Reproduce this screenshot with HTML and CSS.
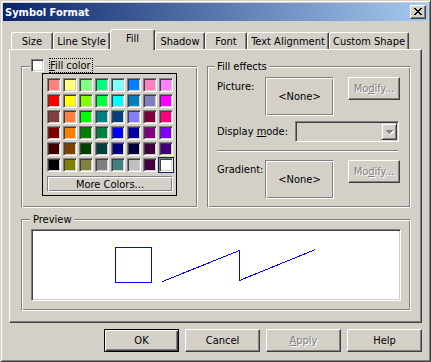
FILE: index.html
```html
<!DOCTYPE html>
<html lang="en">
<head>
    <meta charset="UTF-8">
    <title>Symbol Format</title>
    <link rel="stylesheet" href="styles.css">
</head>
<body>
    <div class="window">
        <div class="titlebar">
            <span class="title">Symbol Format</span>
            <button class="close" aria-label="Close">
                <svg width="8" height="7" viewBox="0 0 8 7"><path d="M0 0h2v1H0zM6 0h2v1H6zM1 1h2v1H1zM5 1h2v1H5zM2 2h4v1H2zM3 3h2v1H3zM2 4h4v1H2zM1 5h2v1H1zM5 5h2v1H5zM0 6h2v1H0zM6 6h2v1H6z" fill="#000"/></svg>
            </button>
        </div>
        <div class="dialog">
            <div class="tabs">
                <div class="tab w-size">Size</div>
                <div class="tab w-line">Line Style</div>
                <div class="tab active w-fill">Fill</div>
                <div class="tab w-shadow">Shadow</div>
                <div class="tab w-font">Font</div>
                <div class="tab w-align">Text Alignment</div>
                <div class="tab w-custom">Custom Shape</div>
            </div>
            <div class="panel">
                <div class="top-row">
                    <div class="group fill-color">
                        <div class="legend check-legend">
                            <span class="checkbox"></span>
                            <span class="focus"><u>F</u>ill color</span>
                        </div>
                        <div class="palette">
                            <div class="swatches">
                                <span class="cell"><i style="background:#ff8080"></i></span>
                                <span class="cell"><i style="background:#ffff80"></i></span>
                                <span class="cell"><i style="background:#80ff80"></i></span>
                                <span class="cell"><i style="background:#00ff80"></i></span>
                                <span class="cell"><i style="background:#80ffff"></i></span>
                                <span class="cell"><i style="background:#0080ff"></i></span>
                                <span class="cell"><i style="background:#ff80c0"></i></span>
                                <span class="cell"><i style="background:#ff80ff"></i></span>

                                <span class="cell"><i style="background:#ff0000"></i></span>
                                <span class="cell"><i style="background:#ffff00"></i></span>
                                <span class="cell"><i style="background:#80ff00"></i></span>
                                <span class="cell"><i style="background:#00ff40"></i></span>
                                <span class="cell"><i style="background:#00ffff"></i></span>
                                <span class="cell"><i style="background:#0080c0"></i></span>
                                <span class="cell"><i style="background:#8080c0"></i></span>
                                <span class="cell"><i style="background:#ff00ff"></i></span>

                                <span class="cell"><i style="background:#804040"></i></span>
                                <span class="cell"><i style="background:#ff8040"></i></span>
                                <span class="cell"><i style="background:#00ff00"></i></span>
                                <span class="cell"><i style="background:#008080"></i></span>
                                <span class="cell"><i style="background:#004080"></i></span>
                                <span class="cell"><i style="background:#8080ff"></i></span>
                                <span class="cell"><i style="background:#800040"></i></span>
                                <span class="cell"><i style="background:#ff0080"></i></span>

                                <span class="cell"><i style="background:#800000"></i></span>
                                <span class="cell"><i style="background:#ff8000"></i></span>
                                <span class="cell"><i style="background:#008000"></i></span>
                                <span class="cell"><i style="background:#008040"></i></span>
                                <span class="cell"><i style="background:#0000ff"></i></span>
                                <span class="cell"><i style="background:#0000a0"></i></span>
                                <span class="cell"><i style="background:#800080"></i></span>
                                <span class="cell"><i style="background:#8000ff"></i></span>

                                <span class="cell"><i style="background:#400000"></i></span>
                                <span class="cell"><i style="background:#804000"></i></span>
                                <span class="cell"><i style="background:#004000"></i></span>
                                <span class="cell"><i style="background:#004040"></i></span>
                                <span class="cell"><i style="background:#000080"></i></span>
                                <span class="cell"><i style="background:#000040"></i></span>
                                <span class="cell"><i style="background:#400040"></i></span>
                                <span class="cell"><i style="background:#400080"></i></span>

                                <span class="cell"><i style="background:#000000"></i></span>
                                <span class="cell"><i style="background:#808000"></i></span>
                                <span class="cell"><i style="background:#808040"></i></span>
                                <span class="cell"><i style="background:#808080"></i></span>
                                <span class="cell"><i style="background:#408080"></i></span>
                                <span class="cell"><i style="background:#c0c0c0"></i></span>
                                <span class="cell"><i style="background:#400040"></i></span>
                                <span class="cell sel"><i style="background:#ffffff"></i></span>
                            </div>
                            <div class="more">More Colors...</div>
                        </div>
                    </div>
                    <div class="group effects">
                        <div class="legend">Fill effects</div>
                        <div class="fx-row first">
                            <span class="fx-label">Picture:</span>
                            <div class="well">&lt;None&gt;</div>
                            <button class="btn small" disabled>Mo<u>d</u>ify...</button>
                        </div>
                        <div class="fx-row mode">
                            <span class="fx-label wide">Display <u>m</u>ode:</span>
                            <div class="combo">
                                <span class="drop">
                                    <svg width="7" height="4" viewBox="0 0 7 4" shape-rendering="crispEdges"><path d="M0 0h7v1H0zM1 1h5v1H1zM2 2h3v1H2zM3 3h1v1H3z" fill="#808080"/></svg>
                                </span>
                            </div>
                        </div>
                        <div class="sep"></div>
                        <div class="fx-row">
                            <span class="fx-label">Gradient:</span>
                            <div class="well">&lt;None&gt;</div>
                            <button class="btn small" disabled>Mo<u>d</u>ify...</button>
                        </div>
                    </div>
                </div>
                <div class="group preview">
                    <div class="legend">Preview</div>
                    <div class="canvas">
                        <svg width="366" height="68" viewBox="0 0 366 68" shape-rendering="crispEdges">
                            <rect x="83.5" y="17.5" width="36" height="35" fill="none" stroke="#0000ff"/>
                            <polyline points="130.5,51.5 207.5,20.5 207.5,50.5 283.5,19.5" fill="none" stroke="#0000ff"/>
                        </svg>
                    </div>
                </div>
            </div>
            <div class="actions">
                <button class="btn default">OK</button>
                <button class="btn">Cancel</button>
                <button class="btn" disabled><u>A</u>pply</button>
                <button class="btn">Help</button>
            </div>
        </div>
    </div>
</body>
</html>
```

FILE: styles.css
```css
body {
    margin: 0;
    background: #d4d0c8;
    font: 11px "DejaVu Sans Condensed", "Liberation Sans", sans-serif;
    color: #000;
}
.window {
    width: 431px;
    height: 362px;
    box-sizing: border-box;
    padding: 2px;
    border: 1px solid;
    border-color: #d4d0c8 #404040 #404040 #d4d0c8;
    box-shadow: inset 1px 1px #fff, inset -1px -1px #808080;
    background: #d4d0c8;
}
.titlebar {
    height: 18px;
    display: flex;
    align-items: center;
    padding: 0 2px 0 2px;
    background: linear-gradient(to right, #0a246a, #a6caf0);
}
.title { flex: 1; color: #fff; font-weight: bold; }
.close {
    width: 16px; height: 14px; box-sizing: border-box;
    padding: 0 1px 1px 0;
    display: flex; align-items: center; justify-content: center;
    background: #d4d0c8;
    border: 1px solid;
    border-color: #fff #404040 #404040 #fff;
    box-shadow: inset -1px -1px #808080;
}
.close svg { display: block; }

.dialog { padding: 8px 6px 0; }

/* tab strip */
.tabs { display: flex; align-items: flex-end; height: 20px; padding-left: 2px; }
.tab {
    height: 17px; box-sizing: border-box;
    display: flex; align-items: center; justify-content: center;
    padding-top: 1px;
    border: 1px solid;
    border-bottom: none;
    border-color: #fff #404040 #fff #fff;
    border-radius: 3px 2px 0 0;
    box-shadow: inset -1px 0 #808080;
    background: #d4d0c8;
}
.tab.active {
    height: 21px;
    margin-bottom: -1px;
    padding: 0 0 3px;
    position: relative;
    z-index: 1;
}
.w-size { width: 42px; }
.w-line { width: 57px; }
.w-fill { width: 45px; }
.w-shadow { width: 50px; }
.w-font { width: 42px; }
.w-align { width: 82px; }
.w-custom { width: 80px; }

.panel {
    height: 274px; box-sizing: border-box;
    padding: 16px 10px 0 11px;
    border: 1px solid;
    border-color: #fff #404040 #404040 #fff;
    box-shadow: inset -1px -1px #808080;
}
.top-row { display: flex; gap: 9px; height: 142px; }

.group {
    box-sizing: border-box;
    border: 1px solid;
    border-color: #808080 #fff #fff #808080;
    box-shadow: inset 1px 1px #fff, inset -1px -1px #808080;
}
.legend {
    width: fit-content;
    height: 13px;
    line-height: 13px;
    margin: -7px 0 0 7px;
    padding: 0 2px;
    background: #d4d0c8;
    white-space: nowrap;
}

/* fill colour */
.fill-color { width: 177px; }
.check-legend {
    display: flex; align-items: center; gap: 5px;
    height: 15px;
    margin: -9px 0 0 8px;
    padding: 0 2px 0 1px;
}
.checkbox {
    width: 13px; height: 13px; box-sizing: border-box;
    background: #fff;
    border: 1px solid;
    border-color: #808080 #fff #fff #808080;
    box-shadow: inset 1px 1px #404040, inset -1px -1px #d4d0c8;
}
.focus { border: 1px dotted #000; height: 13px; line-height: 13px; padding: 0 1px 0 0; }
.palette {
    width: 135px; height: 123px; box-sizing: border-box;
    margin-left: 20px;
    padding: 3px 0 0 3px;
    border: 1px solid #000;
}
.swatches { display: grid; grid-template-columns: repeat(8, 16px); grid-auto-rows: 16px; }
.cell { display: flex; align-items: center; justify-content: center; box-sizing: border-box; }
.cell i {
    width: 14px; height: 14px; box-sizing: border-box;
    border: 1px solid;
    border-color: #808080 #fff #fff #808080;
    box-shadow: inset 1px 1px #404040, inset -1px -1px #d4d0c8;
}
.cell.sel { border: 1px solid #0a246a; }
.more {
    width: 126px; height: 16px; box-sizing: border-box;
    margin: 3px 0 0 1px;
    display: flex; align-items: center; justify-content: center;
    border: 1px solid;
    border-color: #808080 #fff #fff #808080;
    box-shadow: inset 1px 1px #fff, inset -1px -1px #808080;
}

/* fill effects */
.effects { flex: 1; padding-left: 9px; }
.effects .legend { margin-left: -2px; }
.fx-row { display: flex; align-items: flex-start; margin-top: 8px; }
.fx-row.first { margin-top: 4px; }
.fx-row.mode { margin-top: 5px; align-items: center; }
.fx-label { width: 48px; padding-top: 3px; white-space: nowrap; }
.fx-label.wide { width: 78px; padding-top: 0; }
.well {
    width: 69px; height: 39px; box-sizing: border-box;
    display: flex; align-items: center; justify-content: center;
    border: 1px solid;
    border-color: #808080 #fff #fff #808080;
    box-shadow: inset 1px 1px #fff, inset -1px -1px #808080;
}
.combo {
    width: 104px; height: 21px; box-sizing: border-box;
    display: flex; justify-content: flex-end;
    padding: 1px;
    border: 1px solid;
    border-color: #808080 #fff #fff #808080;
    box-shadow: inset 1px 1px #404040, inset -1px -1px #d4d0c8;
}
.drop {
    width: 16px; height: 17px; box-sizing: border-box;
    display: flex; align-items: center; justify-content: center;
    border: 1px solid;
    border-color: #d4d0c8 #404040 #404040 #d4d0c8;
    box-shadow: inset 1px 1px #fff, inset -1px -1px #808080;
}
.drop svg { display: block; filter: drop-shadow(1px 1px 0 #fff); }
.sep {
    width: 181px;
    margin-top: 8px;
    border-top: 1px solid #808080;
    border-bottom: 1px solid #fff;
}

/* preview */
.preview { height: 92px; margin-top: 11px; }
.preview .legend { margin-left: 8px; padding: 0 3px; }
.canvas {
    height: 72px; box-sizing: border-box;
    margin: 3px 9px 0;
    background: #fff;
    border: 1px solid;
    border-color: #808080 #fff #fff #808080;
    box-shadow: inset 1px 1px #404040, inset -1px -1px #d4d0c8;
}
.canvas svg { display: block; }

/* buttons */
.actions { display: flex; justify-content: flex-end; gap: 6px; margin-top: 6px; }
.btn {
    width: 75px; height: 23px; box-sizing: border-box;
    padding: 0;
    font: inherit; color: #000;
    background: #d4d0c8;
    border: 1px solid;
    border-color: #fff #404040 #404040 #fff;
    box-shadow: inset -1px -1px #808080;
}
.btn.small { width: 52px; margin-left: 14px; }
.btn.default {
    border-color: #000;
    box-shadow: inset 1px 1px #fff, inset -1px -1px #404040, inset -2px -2px #808080;
}
.btn:disabled { color: #808080; text-shadow: 1px 1px #fff; }
```
